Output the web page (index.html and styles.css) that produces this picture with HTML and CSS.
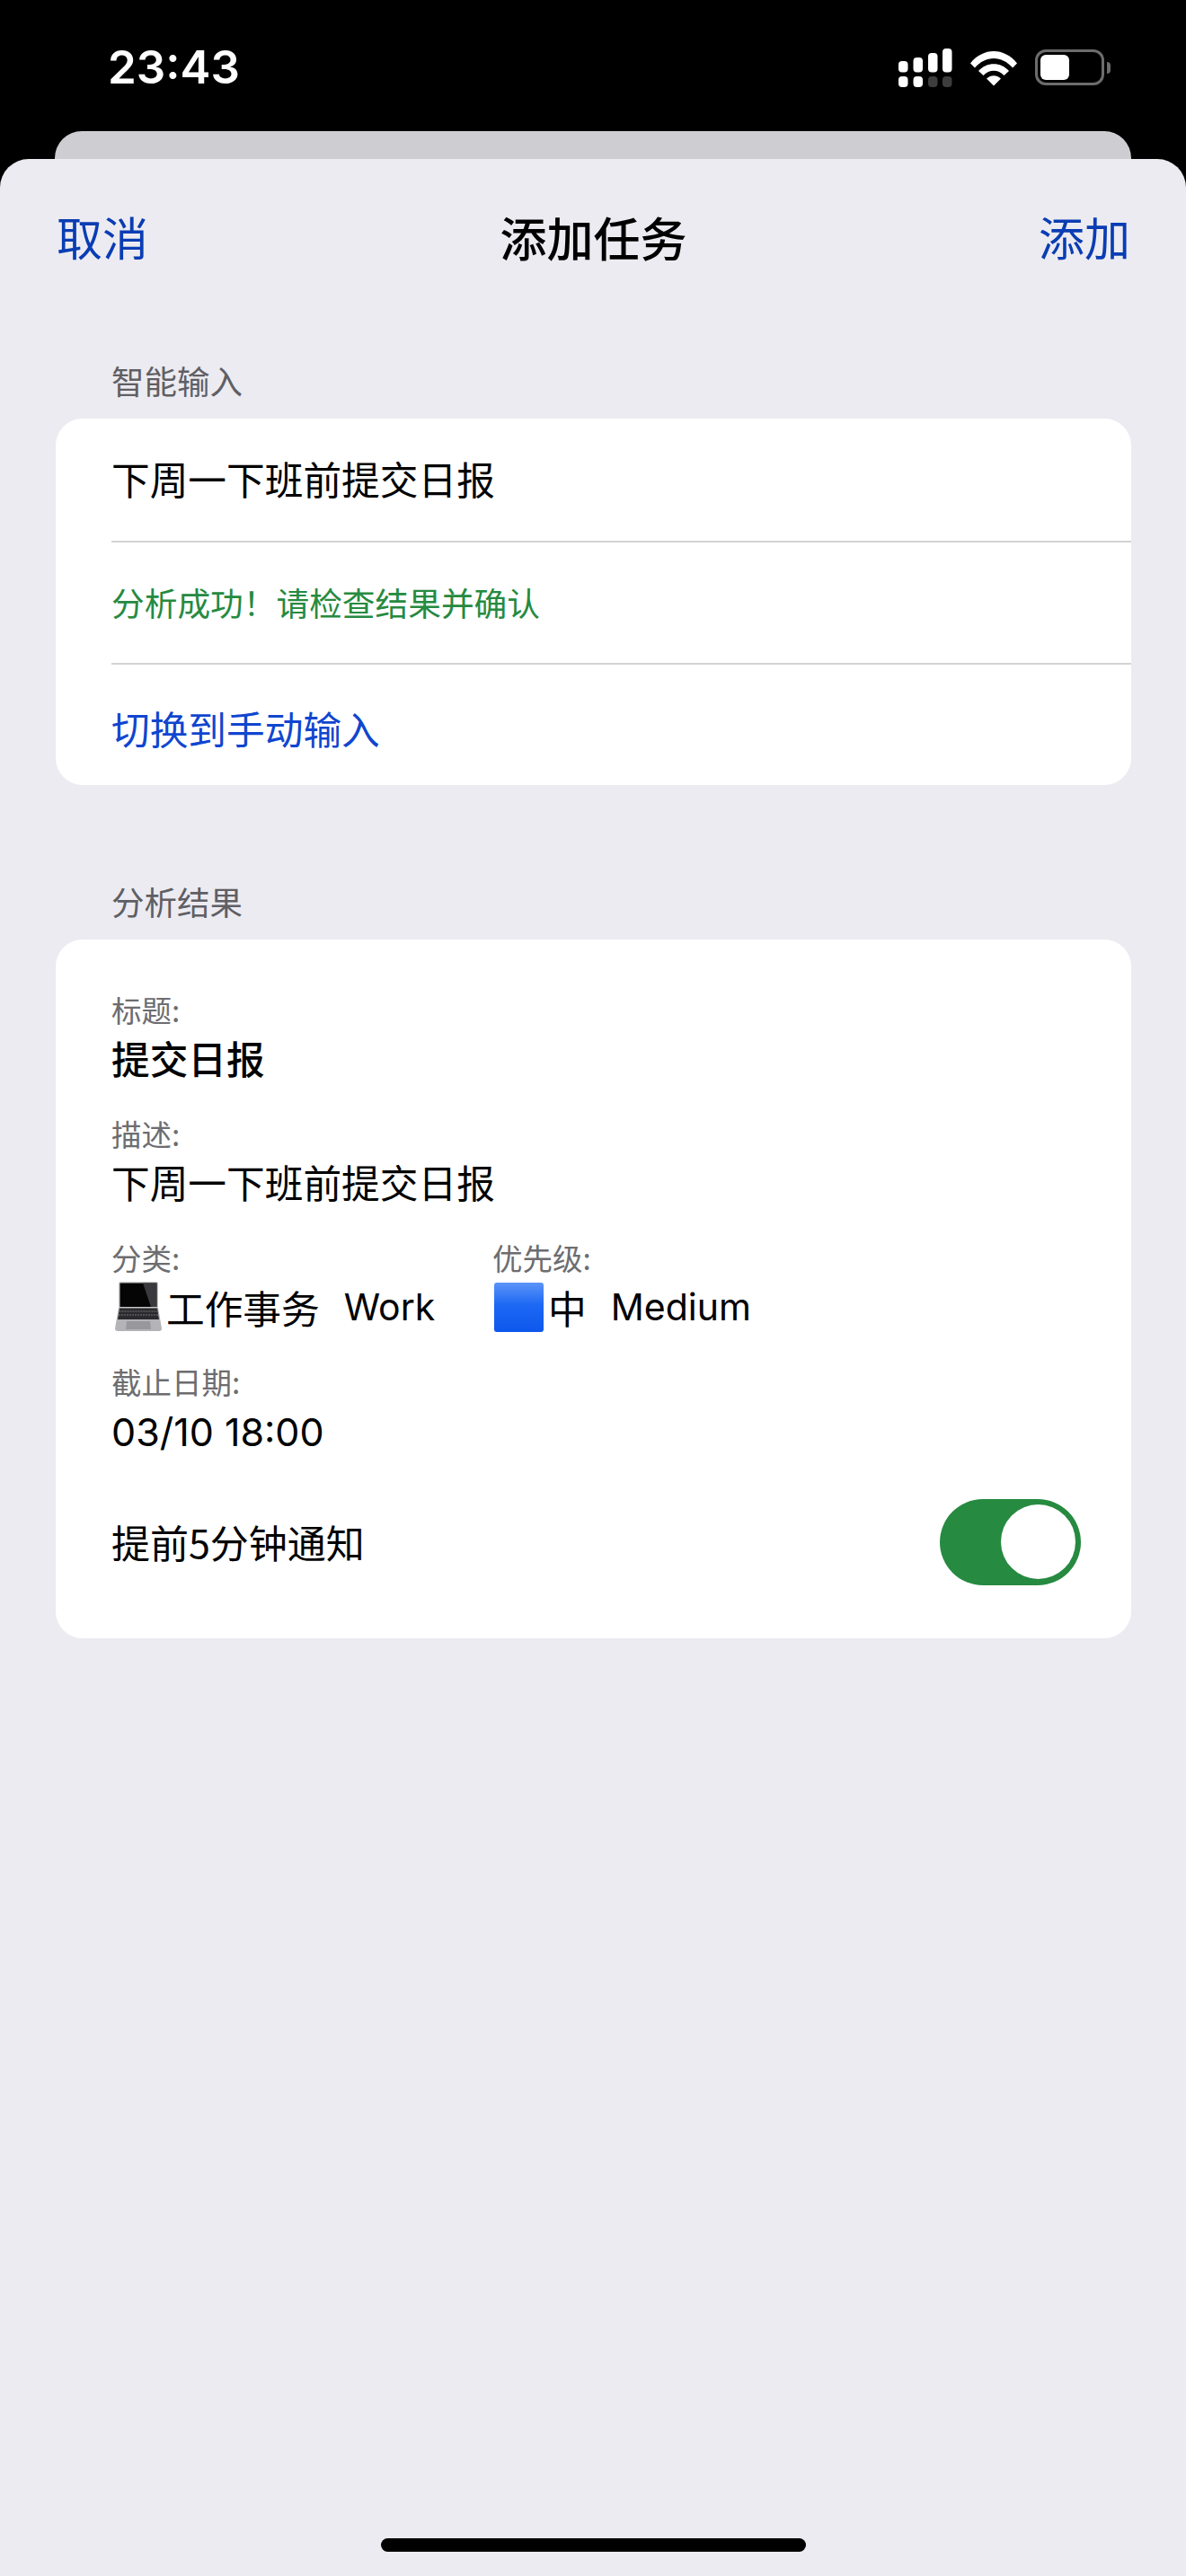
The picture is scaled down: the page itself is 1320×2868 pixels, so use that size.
FILE: index.html
```html
<!DOCTYPE html>
<html lang="zh-CN">
<head>
    <meta charset="UTF-8">
    <title>添加任务</title>
    <link rel="stylesheet" href="styles.css">
</head>
<body>
    <!-- Status bar -->
    <div class="status-bar">
        <span class="time">23:43</span>
        <div class="status-icons">
            <svg class="signal" width="60" height="44" viewBox="0 0 60 44">
                <g fill="#fff">
                    <rect x="0" y="14" width="10.500" height="12.500" rx="4"/>
                    <rect x="16.500" y="10" width="10.500" height="16.500" rx="4"/>
                    <rect x="33" y="5" width="10.500" height="21.500" rx="4"/>
                    <rect x="49" y="0" width="10.500" height="26.500" rx="4"/>
                    <rect x="0" y="31" width="10.500" height="12" rx="4"/>
                    <rect x="16.500" y="31" width="10.500" height="12" rx="4"/>
                </g>
                <g fill="#3d3d3d">
                    <rect x="33" y="31" width="10.500" height="12" rx="4"/>
                    <rect x="49" y="31" width="10.500" height="12" rx="4"/>
                </g>
            </svg>
            <svg class="wifi" width="52" height="40" viewBox="0 0 52 40">
                <path d="M0 14.500C14-3.500 38-3.500 52 14.500L47 19.500C35 5.500 17 5.500 5 19.500Z" fill="#fff"/>
                <path d="M9 23C18 12.500 34 12.500 43 23L37.500 28C31 21 21 21 14.500 28Z" fill="#fff"/>
                <path d="M18 31.500C22.500 27 29.500 27 34 31.500L26 39.500Z" fill="#fff"/>
            </svg>
            <div class="battery">
                <div class="battery-body"><div class="battery-fill"></div></div>
                <div class="battery-cap"></div>
            </div>
        </div>
    </div>

    <div class="back-card"></div>

    <div class="sheet">
        <!-- Navigation -->
        <div class="nav">
            <span class="nav-btn">取消</span>
            <span class="nav-title">添加任务</span>
            <span class="nav-btn">添加</span>
        </div>

        <!-- Smart input -->
        <div class="section-label">智能输入</div>
        <div class="card input-card">
            <div class="input-row input-text">下周一下班前提交日报</div>
            <div class="input-row input-ok">分析成功！请检查结果并确认</div>
            <div class="input-row input-link">切换到手动输入</div>
        </div>

        <!-- Result -->
        <div class="section-label second">分析结果</div>
        <div class="card result-card">
            <div class="field">
                <div class="field-label">标题:</div>
                <div class="field-value bold">提交日报</div>
            </div>
            <div class="field">
                <div class="field-label">描述:</div>
                <div class="field-value">下周一下班前提交日报</div>
            </div>
            <div class="field-columns">
                <div class="field col-category">
                    <div class="field-label">分类:</div>
                    <div class="field-value tag">
                        <svg class="emoji" width="52" height="56" viewBox="0 0 52 56">
                            <path d="M4 2C4 1 5 0 6 0H46C47 0 48 1 48 2V29H4Z" fill="#c9c9cb"/>
                            <path d="M5.500 1.500H46.500V28H5.500Z" fill="#050505"/>
                            <path d="M31 1.500H46.500V28H40Z" fill="#3a3a3e"/>
                            <path d="M4 29H48L52 52C52 54 51 55 49 55H3C1 55 0 54 0 52Z" fill="#b4b4b8"/>
                            <path d="M5 29.500H47L49 42H3Z" fill="#2b2b2e"/>
                            <path d="M4.500 33H47.500M4 37H48" stroke="#77777b" stroke-width="1" stroke-dasharray="2 1"/>
                            <path d="M13 44H39L40 53H12Z" fill="#98989c"/>
                        </svg>
                        <span>工作事务</span>
                        <span class="tag-en">Work</span>
                    </div>
                </div>
                <div class="field">
                    <div class="field-label">优先级:</div>
                    <div class="field-value tag">
                        <div class="blue-square"></div>
                        <span>中</span>
                        <span class="tag-en">Medium</span>
                    </div>
                </div>
            </div>
            <div class="field">
                <div class="field-label">截止日期:</div>
                <div class="field-value date">03/10 18:00</div>
            </div>
            <div class="notify-row">
                <span class="notify-text">提前5分钟通知</span>
                <div class="toggle"><div class="toggle-knob"></div></div>
            </div>
        </div>

        <div class="home-bar"></div>
    </div>
</body>
</html>
```

FILE: styles.css
```css
* {
    margin: 0;
    padding: 0;
    box-sizing: border-box;
}

body {
    width: 1320px;
    height: 2868px;
    overflow: hidden;
    background-color: #000;
    font-family: "Noto Sans CJK SC", "Noto Sans", sans-serif;
    display: flex;
    flex-direction: column;
}

/* Status bar */
.status-bar {
    height: 146px;
    flex-shrink: 0;
    padding: 54px 84px 0 120px;
    display: flex;
    justify-content: space-between;
    align-items: flex-start;
}

.time {
    font-family: Inter, sans-serif;
    font-weight: 600;
    font-size: 51px;
    line-height: 42px;
    color: #fff;
}

.status-icons {
    display: flex;
    align-items: flex-start;
    gap: 20px;
}

.wifi {
    margin-top: 2px;
}

.battery {
    display: flex;
    align-items: center;
    gap: 3px;
    margin-top: 1px;
}

.battery-body {
    width: 77px;
    height: 40px;
    border: 3px solid #6c6c6c;
    border-radius: 12px;
    padding: 3px;
}

.battery-fill {
    width: 32px;
    height: 28px;
    background-color: #fff;
    border-radius: 6px;
}

.battery-cap {
    width: 4px;
    height: 13px;
    background-color: #6c6c6c;
    border-radius: 0 4px 4px 0;
}

/* Sheet behind the current one */
.back-card {
    height: 31px;
    flex-shrink: 0;
    margin: 0 61px;
    background-color: #cdcdd2;
    border-radius: 30px 30px 0 0;
}

.sheet {
    flex: 1;
    display: flex;
    flex-direction: column;
    background-color: #ecebf1;
    border-radius: 32px 32px 0 0;
}

/* Navigation */
.nav {
    height: 176px;
    flex-shrink: 0;
    padding: 0 62px 4px 63px;
    display: flex;
    justify-content: space-between;
    align-items: center;
}

.nav-btn {
    font-size: 51px;
    color: #0a3db3;
}

.nav-title {
    font-size: 52px;
    font-weight: 500;
    color: #000;
}

/* Sections */
.section-label {
    margin: 48px 0 19px 124px;
    font-size: 36.500px;
    line-height: 46px;
    color: #5f5f64;
}

.section-label.second {
    margin-top: 107px;
}

.card {
    margin: 0 61px 0 62px;
    background-color: #fff;
    border-radius: 30px;
    flex-shrink: 0;
}

.input-card {
    padding-left: 62px;
}

.input-row {
    display: flex;
    align-items: center;
    height: 136px;
}

.input-row + .input-row {
    border-top: 2px solid #d3d3d6;
}

.input-text {
    padding-bottom: 4px;
    font-size: 42.700px;
    color: #000;
}

.input-ok {
    padding-bottom: 2px;
    font-size: 36.700px;
    color: #268a40;
}

.input-link {
    padding-top: 5px;
    font-size: 42.700px;
    color: #1046cf;
}

/* Result card */
.result-card {
    padding: 55px 56px 59px 62px;
    display: flex;
    flex-direction: column;
    gap: 28px;
}

.field-label {
    font-size: 33.500px;
    line-height: 46px;
    color: #6d6d70;
}

.field-value {
    font-size: 42.700px;
    height: 64px;
    line-height: 60px;
    color: #000;
}

.field-value.bold {
    font-weight: 500;
}

.field-value.date {
    font-family: Inter, sans-serif;
    font-size: 43px;
    line-height: 66px;
}

.field-columns {
    display: flex;
}

.col-category {
    width: 424px;
}

.tag {
    display: flex;
    align-items: center;
}

.tag-en {
    font-family: Inter, sans-serif;
    margin-left: 27px;
    font-size: 41px;
}

.emoji {
    margin: 0 5px 0 4px;
}

.blue-square {
    width: 55px;
    height: 55px;
    margin: 0 5px 0 2px;
    border-radius: 3px;
    background: linear-gradient(#5c94f8, #1d68f4 45%, #0d57ec);
}

.notify-row {
    margin-top: 16px;
    height: 96px;
    display: flex;
    justify-content: space-between;
    align-items: center;
}

.notify-text {
    padding-bottom: 3px;
    font-size: 43px;
    color: #000;
}

.toggle {
    width: 157px;
    height: 96px;
    border-radius: 48px;
    background-color: #268a40;
    padding: 6px 6px 0 68px;
}

.toggle-knob {
    width: 83px;
    height: 83px;
    border-radius: 50%;
    background-color: #fff;
}

/* Home indicator */
.home-bar {
    width: 473px;
    height: 15px;
    margin: auto auto 27px;
    border-radius: 8px;
    background-color: #000;
}
```
